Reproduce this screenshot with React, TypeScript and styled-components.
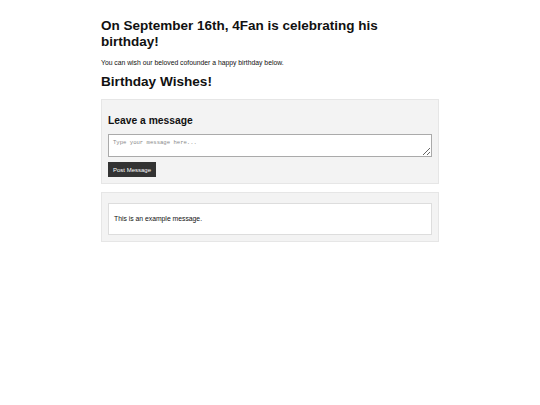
import React from "react";
import styled, { createGlobalStyle } from "styled-components";

const GlobalStyle = createGlobalStyle`
  html, body {
    margin: 0;
    padding: 0;
    background: #fff;
  }
  body {
    font-family: "Liberation Sans", Arial, sans-serif;
    color: #111;
  }
`;

const Page = styled.div`
  width: 338px;
  margin: 0 auto;
  padding-top: 18px;
`;

const Title = styled.h1`
  margin: 0;
  font-size: 13.5px;
  line-height: 16px;
  font-weight: bold;
  color: #111;
  padding-right: 40px;
`;

const Intro = styled.p`
  margin: 8px 0 0;
  font-size: 6.8px;
  line-height: 9px;
  color: #111;
`;

const SectionTitle = styled.h2`
  margin: 6px 0 0;
  font-size: 13.6px;
  line-height: 18px;
  font-weight: bold;
`;

const Panel = styled.div<{ gap?: number }>`
  margin-top: ${({ gap }) => gap ?? 8}px;
  background: #f3f3f3;
  border: 1px solid #e6e6e6;
  padding: 10px 6px 6px;
`;

const FormTitle = styled.h3`
  margin: 4px 0 0;
  font-size: 10.3px;
  line-height: 14px;
  font-weight: bold;
`;

const MessageBox = styled.textarea`
  display: block;
  box-sizing: border-box;
  width: 100%;
  height: 23px;
  margin-top: 6px;
  padding: 4px 4px 2px;
  border: 1px solid #aaa;
  background: #fff;
  font-family: "Liberation Mono", "DejaVu Sans Mono", monospace;
  font-size: 5.6px;
  resize: vertical;
  &::placeholder {
    color: #888;
  }
`;

const PostButton = styled.button`
  display: block;
  margin-top: 5px;
  height: 15px;
  width: 48px;
  padding: 0;
  border: none;
  background: #333;
  color: #fff;
  font-family: "Liberation Sans", Arial, sans-serif;
  font-size: 6px;
`;

const Message = styled.div`
  background: #fff;
  border: 1px solid #ddd;
  padding: 9px 5px;
  font-size: 6.8px;
  line-height: 12px;
  color: #111;
`;

export default function App() {
  return (
    <>
      <GlobalStyle />
      <Page>
        <Title>On September 16th, 4Fan is celebrating his birthday!</Title>
        <Intro>You can wish our beloved cofounder a happy birthday below.</Intro>
        <SectionTitle>Birthday Wishes!</SectionTitle>
        <Panel>
          <FormTitle>Leave a message</FormTitle>
          <MessageBox placeholder="Type your message here..." />
          <PostButton>Post Message</PostButton>
        </Panel>
        <Panel gap={8}>
          <Message>This is an example message.</Message>
        </Panel>
      </Page>
    </>
  );
}
